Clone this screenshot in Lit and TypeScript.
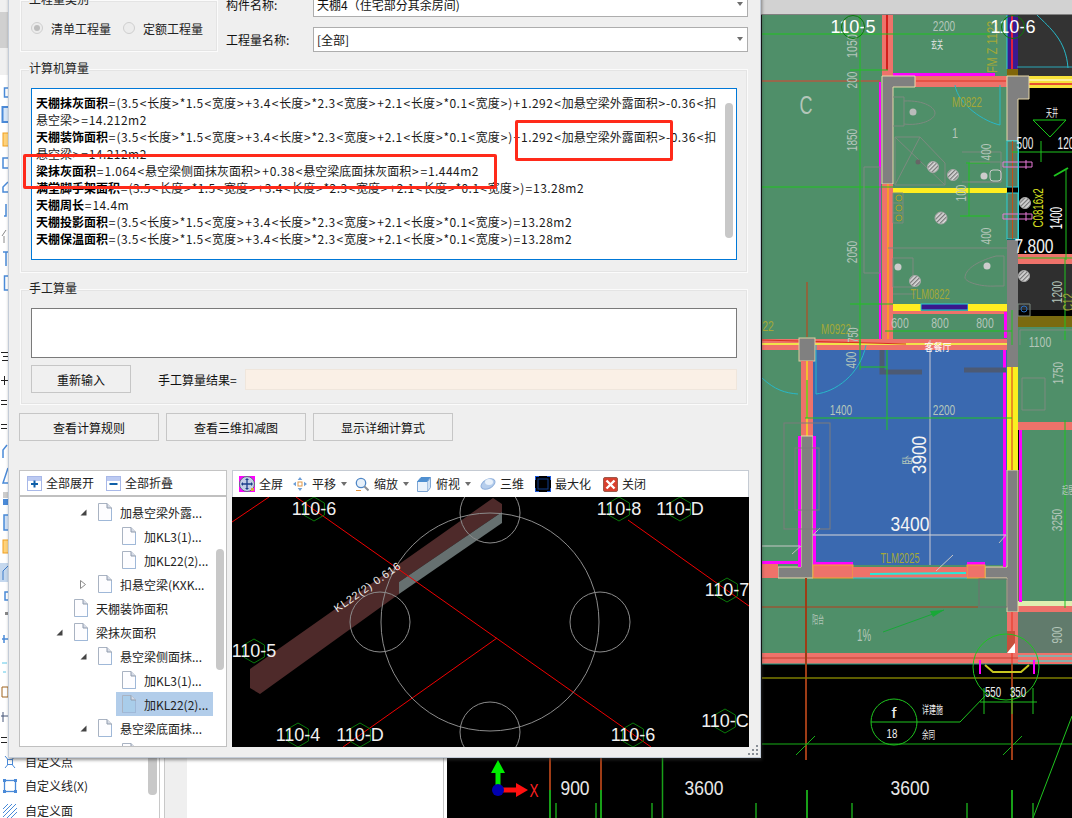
import { LitElement, html, css, svg } from "lit";
import { customElement } from "lit/decorators.js";

const F = "(3.5<长度>*1.5<宽度>+3.4<长度>*2.3<宽度>+2.1<长度>*0.1<宽度>)";
const LINES: [string, string][] = [
  ["天棚抹灰面积", "=" + F + "+1.292<加悬空梁外露面积>-0.36<扣"],
  ["", "悬空梁>=14.212m2"],
  ["天棚装饰面积", "=" + F + "+1.292<加悬空梁外露面积>-0.36<扣"],
  ["", "悬空梁>=14.212m2"],
  ["梁抹灰面积", "=1.064<悬空梁侧面抹灰面积>+0.38<悬空梁底面抹灰面积>=1.444m2"],
  ["满堂脚手架面积", "=" + F + "=13.28m2"],
  ["天棚周长", "=14.4m"],
  ["天棚投影面积", "=" + F + "=13.28m2"],
  ["天棚保温面积", "=" + F + "=13.28m2"],
];

/* Split a formula into CJK runs, math operators (wider) and other ASCII (tracked) */
function formula(s: string) {
  const parts = s.match(/[<>=+]|[!-*,-;?-~]+|[^!-~]+/g) || [];
  return parts.map((p) => {
    if (/^[<>=+]$/.test(p)) return html`<span class="br">${p}</span>`;
    if (/^[!-~]+$/.test(p)) return html`<span class="asc">${p}</span>`;
    return p;
  });
}

type Node = { level: number; arrow?: "open" | "closed"; text: string; selected?: boolean };
const TREE: Node[] = [
  { level: 3, arrow: "open", text: "加悬空梁外露..." },
  { level: 4, text: "加KL3(1)..." },
  { level: 4, text: "加KL22(2)..." },
  { level: 3, arrow: "closed", text: "扣悬空梁(KXK..." },
  { level: 2, text: "天棚装饰面积" },
  { level: 2, arrow: "open", text: "梁抹灰面积" },
  { level: 3, arrow: "open", text: "悬空梁侧面抹..." },
  { level: 4, text: "加KL3(1)..." },
  { level: 4, text: "加KL22(2)...", selected: true },
  { level: 3, arrow: "open", text: "悬空梁底面抹..." },
  { level: 4, text: "加KL3(1)..." },
];

/* CAD text: fixed glyph height, narrow per-char advance, optional rotation */
function t(x: number, y: number, s: string, size: number, fill: string, adv: number, rot = 0) {
  const w = s.length * adv;
  return svg`<text x=${x} y=${y} font-size=${size} fill=${fill} text-anchor="middle" dominant-baseline="central"
    textLength=${w} lengthAdjust="spacingAndGlyphs" transform=${rot ? `rotate(${rot} ${x} ${y})` : ""}>${s}</text>`;
}
function r(x: number, y: number, w: number, h: number, fill: string, stroke = "none") {
  return svg`<rect x=${x} y=${y} width=${w} height=${h} fill=${fill} stroke=${stroke}/>`;
}
function l(x1: number, y1: number, x2: number, y2: number, c: string, w = 1) {
  return svg`<line x1=${x1} y1=${y1} x2=${x2} y2=${y2} stroke=${c} stroke-width=${w}/>`;
}
function hatch(x: number, y: number, rad: number) {
  return svg`<circle cx=${x} cy=${y} r=${rad} fill="url(#hatch)" stroke="#aaa" stroke-width="1"/>`;
}
const hexPts = (x: number, y: number, R: number) =>
  [0, 1, 2, 3, 4, 5]
    .map((i) => {
      const a = (Math.PI / 3) * i + Math.PI / 2;
      return `${(x + R * Math.cos(a)).toFixed(1)},${(y + R * Math.sin(a)).toFixed(1)}`;
    })
    .join(" ");

const GREEN = "#4f8f69";
const SALMON = "#ee726a";
const GRAY = "#808080";
const DIM = "#b4c6ba";
const OLIVE = "#a3a838";
const MAG = "#ff00ff";
const LINE_GREEN = "#1fc41f";

function cadDrawing() {
  return svg`
    <defs>
      <pattern id="hatch" width="3" height="3" patternUnits="userSpaceOnUse" patternTransform="rotate(45)">
        <rect width="3" height="3" fill="#ddd"/><rect width="1.3" height="3" fill="#777"/>
      </pattern>
    </defs>
    ${r(447, 0, 625, 818, "#000")}
    ${r(447, 0, 625, 14, "#d2d2d2")}${r(447, 14, 625, 1, "#808080")}

    ${r(762, 15, 245, 638, GREEN)}
    ${r(1017, 15, 55, 61, "#333")}
    ${r(1018, 254, 54, 10, SALMON)}
    ${r(1018, 264, 54, 46, "#2f2f2f")}
    ${r(1018, 316, 54, 11, "#7a6a10")}
    ${r(1018, 327, 54, 95, GREEN)}
    ${r(1018, 422, 54, 8, SALMON)}
    ${r(1020, 430, 52, 172, GREEN)}
    ${r(1018, 601, 54, 5, "#dff0b0")}
    ${r(1018, 606, 54, 6, SALMON)}
    ${r(1018, 612, 54, 41, "#617b6c")}

    <!-- top walls -->
    ${r(882, 15, 11, 61, SALMON)}${l(887, 15, 887, 70, "#d0201c", 2)}
    ${r(893, 76, 114, 11, SALMON)}${r(893, 73, 102, 3, MAG)}
    ${l(916, 81, 1006, 81, "#e03020")}${l(762, 81, 880, 81, "#e04030")}
    ${r(1007, 15, 11, 54, "#3b1a92")}${l(1007, 15, 1007, 69, "#28d0d8")}${l(1012, 15, 1012, 69, "#e02040", 2)}
    ${r(1007, 69, 11, 8, "#80660a")}
    ${l(1017, 67, 1072, 67, "#2aa8b8")}
    ${r(1018, 76, 54, 12, "#f7e23a")}${l(1018, 80, 1072, 80, "#fff")}${l(1018, 84, 1072, 84, "#e85030", 2)}

    <!-- grey columns -->
    <path d="M882 76H915V87H893V184H882Z" fill=${GRAY} stroke="#e8d8a8"/>
    <path d="M1007 76H1029V99H1018V141H1007Z" fill=${GRAY} stroke="#e8d8a8"/>
    ${r(1007, 240, 11, 100, GRAY)}
    ${r(879, 82, 2, 258, MAG)}${r(882, 184, 11, 156, SALMON)}${l(888, 184, 888, 340, "#f79a2c", 2)}
    ${r(893, 188, 114, 5, "#ffee20")}
    ${r(893, 304, 28, 7, "#ffee20")}${r(921, 304, 47, 6, "#3a188c", "#28d0d8")}${r(968, 304, 39, 7, "#ffee20")}
    ${r(893, 311, 114, 3, SALMON)}${r(1004, 312, 3, 26, MAG)}
    ${r(1007, 141, 11, 46, "#5a7a60", "#28d0d8")}${r(1007, 193, 11, 46, "#5a7a60", "#28d0d8")}
    ${r(1012, 141, 1, 98, "#c05018")}

    <!-- band above the blue room -->
    ${r(762, 339, 245, 11, SALMON)}${l(762, 344, 1007, 344, "#f2e24a", 2)}${l(762, 340, 906, 344, "#d83020")}
    ${r(866, 350, 16, 2, MAG)}

    <!-- blue room -->
    ${r(813, 350, 194, 215, "#3a69b0")}
    ${r(799, 338, 16, 23, GRAY, "#e0d0a0")}
    ${r(801, 361, 12, 75, SALMON)}${l(807, 361, 807, 436, "#f2c030", 2)}
    <path d="M801 436H813V578H778V567H801Z" fill=${GRAY} stroke="#e8d8a8"/>
    ${r(798, 436, 3, 131, MAG)}${r(813, 436, 3, 129, MAG)}
    ${r(762, 564, 16, 14, SALMON)}${r(762, 561, 38, 3, MAG)}
    <path d="M1007 470H1018V612H1007V578H985V567H1007Z" fill=${GRAY} stroke="#e8d8a8"/>
    ${r(1007, 340, 11, 27, GRAY)}
    ${r(1007, 367, 11, 103, "#f8f020")}${l(1012, 367, 1012, 470, "#e89020", 2)}
    ${r(1003, 350, 3, 217, MAG)}${r(1019, 430, 3, 172, MAG)}
    ${r(813, 562, 40, 3, MAG)}${r(967, 562, 18, 3, MAG)}
    ${r(813, 565, 40, 13, SALMON, "#f0a830")}${r(967, 565, 18, 13, SALMON, "#f0a830")}
    ${r(853, 567, 114, 11, SALMON)}${l(853, 578, 967, 578, "#28d0d8")}${l(870, 574, 966, 573, "#28e8d8", 2)}
    <path d="M882 350V372H922M964 370H1006" fill="none" stroke="#4c5a74" stroke-width="5"/>
    ${l(930, 340, 930, 565, "#c8c8d0")}
    ${l(813, 535, 1006, 535, "#d8d8d8")}
    ${l(953, 555, 936, 571, "#c8c8c8")}
    ${l(813, 535, 820, 528, "#c0c0c0")}${l(1006, 535, 999, 543, "#c0c0c0")}
    ${l(762, 546, 800, 546, "#c8c8c8")}${l(792, 554, 801, 546, "#c0c0c0")}
    ${r(784, 423, 46, 106, "none", "#7c7c7c")}
    ${r(795, 448, 24, 62, "none", "#7c7c7c")}

    <!-- lower balcony band -->
    ${r(762, 653, 256, 11, SALMON)}${l(762, 664, 1072, 664, "#18a088")}${l(762, 658, 1018, 658, "#c04030")}
    ${r(1007, 612, 11, 41, SALMON)}${l(1012, 612, 1012, 664, "#e83020")}
    ${r(1007, 631, 8, 22, "#fff")}<path d="M1007 631H1015V643L1007 653Z" fill="#c8503c"/>
    ${r(1018, 653, 54, 11, SALMON)}
    ${l(1018, 656, 1072, 656, "#28e8e8")}${l(1018, 661, 1072, 661, "#28e8e8")}
    ${l(762, 607, 978, 607, "#b83c1c")}
    ${r(979, 579, 28, 28, "none", "#707070")}
    ${l(806, 578, 806, 760, "#9e3c16", 2)}
    ${l(883, 632, 944, 610, "#18a838")}<path d="M944 610L930 611L933 617Z" fill="#18a838"/>

    <!-- green dim lines top room -->
    ${l(860, 15, 860, 345, LINE_GREEN)}
    ${l(762, 34, 990, 34, LINE_GREEN)}
    ${l(850, 70, 888, 70, LINE_GREEN)}${l(762, 187, 893, 187, LINE_GREEN)}
    ${l(850, 304, 893, 304, LINE_GREEN)}
    ${l(885, 331, 1012, 331, LINE_GREEN)}
    ${l(966, 163, 990, 163, LINE_GREEN)}${l(969, 163, 969, 216, LINE_GREEN)}${l(960, 216, 990, 216, LINE_GREEN)}
    ${l(1012, 152, 1072, 152, LINE_GREEN)}${l(1041, 141, 1041, 162, LINE_GREEN)}
    ${l(1066, 170, 1066, 260, LINE_GREEN)}${l(1054, 176, 1068, 168, LINE_GREEN, 2)}
    ${l(1018, 258, 1072, 258, LINE_GREEN)}
    ${l(1065, 258, 1065, 340, LINE_GREEN)}${l(1065, 420, 1065, 608, LINE_GREEN)}
    ${l(1012, 310, 1012, 345, LINE_GREEN)}
    ${l(805, 418, 1012, 418, LINE_GREEN)}${l(887, 350, 887, 430, LINE_GREEN)}${l(860, 367, 887, 367, LINE_GREEN)}
    ${l(860, 340, 860, 370, LINE_GREEN)}
    ${l(807, 380, 807, 418, LINE_GREEN)}

    <!-- door arcs -->
    <path d="M955 85C958 105 985 122 1000 125V85" fill="none" stroke="#28b8c8"/>
    <path d="M816 394C835 392 860 375 866 345M816 345V394" fill="none" stroke="#28b8c8"/>
    <path d="M762 378C775 390 785 393 798 394" fill="none" stroke="#28b8c8"/>
    <path d="M1037 15C1050 28 1066 40 1068 68" fill="none" stroke="#28b8c8"/>

    <!-- fixtures -->
    <g fill="none" stroke="#7d8a80">
      <path d="M893 97H904V126H893M904 101C925 100 935 108 935 113C935 120 920 126 904 124"/>
      <path d="M895 137H920L945 163V185H895Z M895 137L945 185M920 137L895 185"/>
      <path d="M962 152H1001V182H962M970 162H1001V182H970"/>
      <path d="M864 167H880V273H864Z"/>
      <path d="M888 248H1007M893 258H913V287H893Z M893 294H915"/>
      <path d="M1004 256H996C975 262 965 270 965 278C966 282 980 287 996 286H1004Z"/>
      <path d="M893 193H903V223H893Z M893 203H903M893 213H903"/>
      <path d="M1018 304H1030V316H1018Z"/>
      <path d="M1020 330H1072M1020 330V345M1022 378H1045V410H1022Z"/>
    </g>
    <circle cx="899" cy="198" r="3" fill="none" stroke="#b0a030"/><circle cx="899" cy="208" r="3" fill="none" stroke="#b0a030"/><circle cx="899" cy="218" r="3" fill="none" stroke="#b0a030"/>
    ${l(807, 282, 807, 337, "#a05830", 1.5)}
    <circle cx="913" cy="112" r="3.5" fill="#bbb"/><circle cx="918" cy="162" r="2.5" fill="#666"/>
    <circle cx="984" cy="176" r="3.5" fill="#ccc"/><rect x="990" y="170" width="11" height="11" rx="3" fill="none" stroke="#ccc"/>
    <circle cx="898" cy="267" r="3.5" fill="#ccc"/><circle cx="987" cy="266" r="3.5" fill="#ccc"/>
    <circle cx="1024" cy="309" r="3" fill="none" stroke="#2a70c0"/>
    ${hatch(933, 167, 5.5)}${hatch(953, 175, 5.5)}${hatch(941, 218, 6)}${hatch(915, 281, 5.5)}${hatch(1025, 203, 5.5)}${hatch(1024, 276, 5.5)}
    <g fill="none" stroke="#e878d8">
      <path d="M1003 162H1032V167H1003ZM1026 160V169"/>
      <path d="M1003 214H1032V219H1003ZM1026 212V221"/>
    </g>
    <path d="M1033 120H1066L1050 137Z" fill="none" stroke="#18d018"/>
    ${r(1018, 141, 1, 98, "#28d0d8")}

    <!-- lower section -->
    ${l(762, 678, 1072, 678, "#7c7c00", 1.5)}
    ${l(762, 744, 1072, 744, "#16b016")}
    ${l(796, 755, 815, 736, "#16b016")}${l(1003, 755, 1022, 736, "#16b016")}
    ${l(1012, 664, 1012, 760, "#9e3c16", 2)}
    <circle cx="1006" cy="667" r="33" fill="none" stroke=${LINE_GREEN}/>
    <path d="M985 665L993 672H1021L1029 665" fill="none" stroke="#c8c820" stroke-width="2"/>
    ${r(979, 660, 2, 14, MAG)}${r(1033, 660, 2, 14, MAG)}
    ${l(980, 702, 1037, 702, LINE_GREEN)}
    ${l(984, 688, 984, 714, LINE_GREEN)}${l(1012, 688, 1012, 714, LINE_GREEN)}${l(1033, 688, 1033, 714, LINE_GREEN)}
    <circle cx="894" cy="722" r="23" fill="none" stroke=${LINE_GREEN}/>
    <path d="M871 722H960L985 696" fill="none" stroke=${LINE_GREEN}/>
    ${l(1072, 716, 1033, 818, LINE_GREEN)}

    <!-- bottom ticks -->
    ${[550, 601, 807, 1012].map((x) => l(x, 790, x, 818, "#18a018", 2))}
    ${l(550, 758, 550, 790, "#9e3c16", 2)}${l(601, 758, 601, 790, "#9e3c16", 2)}
    ${l(662.5, 758, 662.5, 818, "#18a018", 1.5)}
    ${[556, 596, 652, 756, 852, 967, 1033].map((x) => l(x, 803, x, 818, "#18a018", 1.5))}

    <!-- axis -->
    ${l(498, 790, 498, 770, "#00ee00", 5)}<path d="M498 760L505 773H491Z" fill="#00ee00"/>
    ${l(498, 790, 518, 790, "#ff1010", 5)}<path d="M528 790L516 783V797Z" fill="#ff1010"/>
    <circle cx="498" cy="790" r="6" fill="#0000b0"/>

    <!-- texts -->
    <g font-family="'Liberation Sans','Noto Sans CJK SC',sans-serif">
      ${t(534, 791, "X", 18, "#ff2020", 9)}
      ${t(575, 788, "900", 20, "#e8e8e8", 9.7)}${t(704, 788, "3600", 20, "#e8e8e8", 9.7)}${t(910, 788, "3600", 20, "#e8e8e8", 9.7)}
      ${t(944, 25, "2200", 15, DIM, 5.6)}
      ${t(851, 46, "1050", 15, DIM, 6, -90)}${t(851, 80, "200", 15, DIM, 5.6, -90)}
      ${t(851, 140, "1850", 15, DIM, 5.6, -90)}${t(851, 252, "2050", 15, DIM, 5.6, -90)}
      ${t(806, 105, "C", 26, DIM, 13)}
      ${t(967, 101, "M0822", 15, OLIVE, 6)}${t(955, 132, "1", 15, DIM, 6)}
      ${t(991, 47, "FM Z 1123", 15, OLIVE, 5.8, -90)}
      ${t(985, 152, "400", 15, DIM, 5.6, -90)}${t(985, 236, "400", 15, DIM, 5.6, -90)}${t(960, 193, "100", 15, DIM, 5.6, -90)}
      ${t(1025, 143, "500", 16, "#eee", 5.6)}${t(1066, 143, "120", 16, "#eee", 5.6)}
      ${t(1037, 208, "C0816x2", 15, "#d8e020", 5.6, -90)}
      ${t(1056, 218, "1400", 16, "#fff", 5.6, -90)}
      ${t(1034, 246, "7.800", 20, "#f0f0f0", 7.8)}
      ${t(1056, 292, "1200", 15, DIM, 5.6, -90)}${t(1067, 302, "C12", 15, OLIVE, 6, -90)}
      ${t(930, 293, "TLM0822", 15, OLIVE, 5.6)}
      ${t(900, 322, "600", 15, DIM, 5.8)}${t(940, 322, "800", 15, DIM, 5.8)}${t(985, 322, "800", 15, DIM, 5.8)}
      ${t(836, 328, "M0922", 15, OLIVE, 6)}${t(768, 325, "22", 15, OLIVE, 5.8)}${t(853, 335, "750", 14, DIM, 5, -90)}
      ${t(1040, 341, "1100", 15, DIM, 5.6)}
      ${t(850, 360, "400", 15, DIM, 5.6, -90)}
      ${t(841, 409, "1400", 15, DIM, 5.6)}${t(944, 409, "2200", 15, DIM, 5.6)}
      ${t(919, 455, "3900", 20, "#f4f4f4", 9.6, -90)}${t(910, 524, "3400", 20, "#f4f4f4", 9.7)}
      ${t(900, 557, "TLM2025", 15, OLIVE, 5.6)}
      ${t(1057, 373, "1750", 15, DIM, 5.6, -90)}${t(1056, 520, "3250", 15, DIM, 5.6, -90)}${t(1056, 635, "900", 15, DIM, 5.6, -90)}
      ${t(864, 635, "1%", 17, DIM, 7)}
      ${t(993, 692, "550", 14, "#eee", 5.4)}${t(1018, 692, "350", 14, "#eee", 5.4)}
      ${t(894, 712, "f", 15, "#f0f0f0", 5)}${t(892, 733, "18", 13, "#f0f0f0", 5.4)}
      ${t(853, 27, "110-5", 18, "#fff", 9)}${t(1013, 27, "110-6", 18, "#fff", 9)}
      ${t(937, 45, "玄关", 11, "#e8e8e8", 6)}${t(1052, 113, "天井", 11, "#f4f4f4", 6)}
      ${t(938, 347, "客餐厅", 10, "#fff", 9)}
      ${t(907, 460, "卧", 10, DIM, 10, -90)}${t(818, 620, "阳台", 11, DIM, 6)}
      ${t(1068, 490, "起居", 10, DIM, 6)}
      ${t(932.5, 710, "详建施", 11, "#eee", 7)}${t(928.5, 735, "余同", 11, "#eee", 6.5)}
    </g>
    <circle cx="853" cy="27" r="11.5" fill="none" stroke="#0a7a0a"/>
    <circle cx="1013" cy="27" r="11.5" fill="none" stroke="#0a7a0a"/>
  `;
}

function previewDrawing() {
  const labels: [number, number, string][] = [
    [82, 12, "110-6"], [387, 12, "110-8"], [448, 12, "110-D"], [495, 93, "110-7"], [22, 154, "110-5"],
    [66, 238, "110-4"], [128, 238, "110-D"], [401, 238, "110-6"], [493, 224, "110-C"],
  ];
  return svg`
    <rect width="517" height="250" fill="#000"/>
    <polygon points="18,172 261,1 270,7 270,15 167,85 167,97 28,197 18,191" fill="#4e2a2a"/>
    <polygon points="270,15 270,26 167,97 167,85" fill="#667070"/>
    <g stroke="#f00000" stroke-width="1">
      <line x1="64" y1="0" x2="419" y2="250"/>
      <line x1="0" y1="25" x2="37" y2="0"/>
      <line x1="396" y1="23" x2="517" y2="109"/>
      <line x1="265" y1="141" x2="111" y2="250"/>
    </g>
    <g fill="none" stroke="#8c8c8c" stroke-width="1">
      <circle cx="258" cy="125" r="109"/>
      <circle cx="258" cy="16" r="30"/><circle cx="148" cy="125" r="30"/>
      <circle cx="368" cy="125" r="30"/><circle cx="258" cy="235" r="30"/>
    </g>
    ${labels.map(([x, y]) => svg`<polygon points=${hexPts(x, y, 12)} fill="none" stroke="#0a7a0a"/>`)}
    <g font-family="'Liberation Sans',sans-serif" fill="#f0f0f0" text-anchor="middle" dominant-baseline="central">
      ${labels.map(([x, y, s]) => svg`<text x=${x} y=${y} font-size="18">${s}</text>`)}
      <text x="135" y="90" font-size="11" textLength="78" transform="rotate(-35 135 90)">KL22(2) 0.616</text>
    </g>`;
}

const docIcon = html`<svg class="doc" width="14" height="18" viewBox="0 0 14 18">
  <path d="M.5.5H9L13.5 5V17.5H.5Z" class="doc-body" stroke="#a9b3c2"/>
  <path d="M9 .5V5H13.5" fill="#d6dbe6" stroke="#8f9bad"/>
  <path d="M13.5 6V17.5H1" fill="none" stroke="#9fb8d8"/>
</svg>`;

const icons = {
  plus: html`<svg width="15" height="15" viewBox="0 0 15 15"><rect x=".5" y=".5" width="14" height="14" fill="#fff" stroke="#a8b8e8"/><rect x="1" y="1" width="13" height="4" fill="#bccaf2"/><path d="M7.5 4.5v7M4 8h7" stroke="#0f5fa8" stroke-width="2"/></svg>`,
  minus: html`<svg width="15" height="15" viewBox="0 0 15 15"><rect x=".5" y=".5" width="14" height="14" fill="#fff" stroke="#a8b8e8"/><rect x="1" y="1" width="13" height="4" fill="#bccaf2"/><path d="M3.5 8h8" stroke="#0f5fa8" stroke-width="2"/></svg>`,
  full: html`<svg width="16" height="16" viewBox="0 0 16 16"><rect width="16" height="16" fill="#f0f"/><circle cx="8" cy="8" r="7.5" fill="#c3cfe6" stroke="#5d6a80"/><path d="M8 3v10M3 8h10" stroke="#1c3f8a" stroke-width="1.3"/><path d="M8 2l2 2H6ZM8 14l2-2H6ZM2 8l2-2v4ZM14 8l-2-2v4Z" fill="#1c3f8a"/><rect x="12" y="12" width="3" height="3" fill="#d9a53a"/></svg>`,
  pan: html`<svg width="14" height="14" viewBox="0 0 14 14"><rect x="5" y="5" width="4" height="4" fill="none" stroke="#e0994a"/><path d="M7 0l2.3 3H4.7ZM7 14l2.3-3H4.7ZM0 7l3-2.3v4.600ZM14 7l-3-2.300v4.600Z" fill="#6d9ed6"/></svg>`,
  zoom: html`<svg width="14" height="15" viewBox="0 0 14 15"><circle cx="6" cy="6" r="4.700" fill="#e6f0fa" stroke="#4f87c6" stroke-width="1.300"/><path d="M9.500 9.500L13.500 13.500" stroke="#8a8f96" stroke-width="2"/><path d="M1 13.500h5" stroke="#e0903a"/></svg>`,
  top: html`<svg width="14" height="15" viewBox="0 0 14 15"><path d="M.5 4.500H10.500V14.500H.5Z" fill="#eaf2fb" stroke="#7ea6d4"/><path d="M.5 4.500L4 .5H13.500L10.500 4.500Z" fill="#4f8fd0" stroke="#4f8fd0"/><path d="M10.500 4.500L13.500 .5V10.500L10.500 14.500" fill="#cfe0f2" stroke="#7ea6d4"/></svg>`,
  three: html`<svg width="16" height="14" viewBox="0 0 16 14"><ellipse cx="8" cy="7" rx="7.500" ry="4.500" transform="rotate(-28 8 7)" fill="#b5cdec" stroke="#8fb0dc"/><ellipse cx="9" cy="5" rx="4" ry="3" fill="#e8f1fb"/></svg>`,
  max: html`<svg width="16" height="16" viewBox="0 0 16 16"><rect width="16" height="16" fill="#000"/><rect x="3" y="3" width="10" height="10" fill="none" stroke="#123e8c"/><path d="M0 4V0H4M12 0H16V4M16 12V16H12M4 16H0V12" fill="none" stroke="#1a56d8" stroke-width="2"/></svg>`,
  close: html`<svg width="15" height="15" viewBox="0 0 15 15"><rect x=".5" y=".5" width="14" height="14" rx="1.500" fill="#d8402e" stroke="#9c5a4c"/><path d="M3.500 3.500l8 8M11.500 3.500l-8 8" stroke="#fff" stroke-width="2.400"/></svg>`,
};

@customElement("app-root")
export class AppRoot extends LitElement {
  static styles = css`
    :host {
      display: block;
      position: relative;
      width: 1072px;
      height: 818px;
      overflow: hidden;
      background: #fff;
      font-family: "Noto Sans CJK SC", "Liberation Sans", sans-serif;
      font-size: 12px;
      color: #111;
    }
    .desktop { display: flex; width: 100%; height: 100%; }

    /* application behind the dialog */
    .side { width: 159px; height: 100%; position: relative; display: flex; flex-direction: column; justify-content: flex-end; border-right: 1px solid #c8c8c8; }
    .side-top { position: absolute; left: 0; top: 0; }
    .side-row { height: 24.5px; display: flex; align-items: center; gap: 8px; padding-left: 3px; color: #222; line-height: 1; }
    .side-row svg { width: 14px; height: 14px; flex: none; }
    .side-list { padding-bottom: 0; margin-bottom: -5px; }
    .side-thumb { position: absolute; left: 148px; top: 745px; width: 9px; height: 50px; background: #c8c8c8; border-radius: 0 0 4px 4px; }
    .gutter { width: 4px; }
    .pane-gray { width: 22px; background: #efefef; border-left: 1px solid #c8c8c8; }
    .pane-white { width: 256px; border-right: 1px solid #c8c8c8; }
    .pane-space { width: 3px; }
    .cad { width: 625px; height: 818px; display: block; flex: none; }

    /* dialog window */
    .dialog {
      position: absolute;
      left: 8px;
      top: -20px;
      width: 753px;
      height: 778px;
      box-sizing: border-box;
      background: #efefef;
      border: 1px solid #c3ccd8;
      box-shadow: 1px 2px 3px rgba(60, 60, 60, 0.55);
      padding: 11px 12px 0 11px;
      display: flex;
      flex-direction: column;
    }
    .top-row { display: flex; height: 60px; gap: 8px; flex: none; }
    .group { border: 1px solid #fbfbfb; box-shadow: 0 0 0 1px #e4e4e4 inset; box-sizing: border-box; }
    .legend { display: block; width: fit-content; height: 16px; line-height: 16px; margin: -10px 0 0 8px; color: #222; background: #efefef; }
    .calc .legend, .manual .legend { margin-left: -2px; }
    .type-group { width: 198px; height: 52px; margin-top: 8px; }
    .radios { display: flex; align-items: center; padding: 8px 0 0 10px; height: 26px; }
    .radio { width: 12px; height: 12px; border-radius: 50%; border: 1px solid #cfcfcf; box-sizing: border-box; background: #ececec; margin-right: 8px; display: flex; align-items: center; justify-content: center; }
    .radio.on::after { content: ""; width: 6px; height: 6px; border-radius: 50%; background: #bdbdbd; }
    .radios span + .radio { margin-left: 12px; }
    .radios span { color: #222; }
    .fields { flex: 1; display: flex; flex-direction: column; gap: 10px; }
    .field { display: flex; align-items: center; height: 25px; }
    .field-label { width: 87px; flex: none; padding-bottom: 1px; }
    .select { flex: 1; height: 25px; box-sizing: border-box; background: #fff; border: 1px solid #adadad; display: flex; align-items: center; justify-content: space-between; padding: 0 4px 1px 3px; }
    .caret { width: 0; height: 0; border: 3px solid transparent; border-top: 4px solid #6e6e6e; border-bottom: 0; flex: none; }

    .calc { margin-top: 17px; height: 204px; flex: none; padding: 0 10px; }
    .calc .box { margin-top: 12px; }
    .box { position: relative; height: 172px; box-sizing: border-box; background: #fff; border: 1px solid #0078d7; padding: 5px 4px; }
    .line { height: 17px; line-height: 17px; white-space: nowrap; color: #1a1a1a; }
    .line b { font-weight: 700; color: #000; }
    .asc { letter-spacing: 0.45px; }
    .br { padding: 0 0.85px; }
    .vthumb { position: absolute; background: #c8c8c8; border-radius: 4px; width: 8px; }
    .box .vthumb { left: 693px; top: 14px; height: 135px; }

    .manual { margin-top: 16px; height: 116px; flex: none; padding: 0 10px; }
    .manual-input { margin-top: 12px; height: 50px; box-sizing: border-box; background: #fff; border: 1px solid #7a7a7a; }
    .manual-row { display: flex; align-items: center; margin-top: 7px; }
    .btn { box-sizing: border-box; height: 28px; display: flex; align-items: center; justify-content: center; border: 1px solid #c6c6c6; background: #f0f0f0; color: #111; flex: none; }
    .btn.small { width: 100px; }
    .btn.wide { width: 140px; }
    .result-label { margin-left: 27px; width: 87px; flex: none; }
    .result { flex: 1; height: 21px; box-sizing: border-box; background: #faf0e6; border: 1px solid #efe6dc; }
    .actions { display: flex; gap: 7px; margin: 8px 0 0 -1px; flex: none; }

    .panes { display: flex; gap: 5px; margin: 29px -1px 0 -1px; height: 277px; flex: none; }
    .pane { position: relative; display: flex; flex-direction: column; }
    .pane.tree-pane { width: 208px; }
    .pane.view-pane { width: 517px; }
    .toolbar { height: 27px; flex: none; box-sizing: border-box; background: #fff; border: 1px solid #c5cbd3; border-bottom: 0; display: flex; align-items: center; color: #222; }
    .tool span { position: relative; top: -1px; }
    .tree-pane .toolbar { padding-left: 7px; border-color: #c4c4c4; border-bottom: 2px solid #c0c0c0; }
    .tool { display: flex; align-items: center; gap: 4px; flex: none; }
    .tree-pane .tool { width: 79px; }
    .view-pane .toolbar { padding-left: 1px; }
    .view-pane .tool { padding: 0 5px; gap: 5px; }
    .view-pane .tool.g4 { gap: 4px; }
    .tool .caret { margin-right: -2px; }
    .tool.m1 { margin-left: 1px; }
    .tool.m2 { margin-left: 2px; }
    .tool svg { flex: none; display: block; }
    .tree { position: relative; flex: 1; min-height: 0; overflow: hidden; box-sizing: border-box; background: #fff; border: 1px solid #c0c0c0; border-top: 0; padding-top: 3px; }
    .tree .vthumb { left: 196px; top: 52px; height: 121px; }
    .row { height: 24px; display: flex; align-items: center; white-space: nowrap; color: #222; }
    .arrow { width: 18px; flex: none; display: flex; justify-content: center; margin-left: -6px; padding-right: 6px; box-sizing: content-box; }
    .arrow svg { display: block; }
    .node { display: flex; align-items: center; height: 24px; gap: 8px; padding: 0 5px 0 6px; margin-left: -6px; }
    .node.selected { background: #b2cdea; }
    .doc { flex: none; }
    .doc-body { fill: #fdfdff; }
    .node.selected .doc-body { fill: #a9cdea; }
    .canvas { width: 517px; height: 250px; display: block; flex: none; }
    .grip { position: absolute; right: 1px; bottom: 1px; display: block; }

    .mark { position: absolute; box-sizing: border-box; border: 3px solid #ff2a1a; border-radius: 2px; pointer-events: none; }
    .mark.a { left: 23px; top: 154px; width: 474px; height: 35px; }
    .mark.b { left: 515px; top: 120px; width: 158px; height: 41px; }
  `;

  render() {
    return html`
      <div class="desktop">
        <div class="side">
          <svg class="side-top" width="8" height="760" viewBox="0 0 8 760">
            <rect width="8" height="12" fill="#f0f0f0"/><rect y="12" width="8" height="36" fill="#d0d0d0"/><rect y="48" width="8" height="27" fill="#f0f0f0"/>
            <g fill="none" stroke="#4a8ad8" stroke-width="1.500">
              <rect x="4.500" y="88" width="6" height="9"/>
              <rect x="2.500" y="107" width="8" height="15" fill="#d6e6f8" stroke-width="2"/>
              <rect x="3" y="158" width="8" height="10"/>
              <path d="M8 182L3 187V192H8"/>
              <path d="M6 204V216H4"/>
              <path d="M3 252H8M6 252V266"/>
              <rect x="4.500" y="276" width="6" height="14"/>
              <path d="M7 445L3 450V458"/>
              <path d="M8 468L3 483H8"/>
              <rect x="4" y="515" width="5" height="15" fill="#cfe0f5"/>
              <rect x="5" y="592" width="6" height="8"/>
              <path d="M2 639H8M4 635V643"/>
            </g>
            <rect x="3" y="133" width="6" height="13" fill="#ffd27a" stroke="#f0a020"/>
            <path d="M6 230L2 236M4 236V243" stroke="#888" fill="none"/>
            <rect x="3" y="492" width="6" height="6" fill="#ccc"/><rect x="3" y="499" width="6" height="6" fill="#4a8ad8"/>
            <rect x="3" y="540" width="6" height="13" fill="#ffd27a" stroke="#f0a020"/>
            <rect y="563" width="8" height="19" fill="#c5d8ee"/><path d="M8 566L3 571V580" stroke="#3c7ac8" fill="none"/>
            <rect x="5" y="612" width="3" height="3" fill="#888"/>
            <path d="M2 663H7M3 672H6" stroke="#5cc8e8"/>
            <path d="M2 687H8V697H2Z" fill="none" stroke="#a0641e"/>
            <path d="M1 716H8M3 712V722" stroke="#457" fill="none"/>
            <g fill="#222"><rect x="1" y="352" width="7" height="1"/><rect x="3" y="356" width="5" height="1"/><rect x="2" y="360" width="6" height="1"/>
              <rect x="4" y="376" width="1" height="9"/><rect x="1" y="380" width="7" height="1"/>
              <rect x="1" y="400" width="6" height="1"/><rect x="1" y="404" width="6" height="1"/>
              <rect x="1" y="424" width="6" height="1"/><rect x="1" y="428" width="6" height="1"/>
              <rect x="1" y="737" width="6" height="1"/><rect x="1" y="742" width="6" height="1"/></g>
          </svg>
          <div class="side-list">
            <div class="side-row">
              <svg viewBox="0 0 14 14"><path d="M2 1L12 13M12 1L2 13" stroke="#4a8ad8"/><rect x="4.500" y="4.500" width="5" height="5" fill="#fff" stroke="#4a8ad8"/></svg>
              自定义点
            </div>
            <div class="side-row">
              <svg viewBox="0 0 14 14"><rect x="1.500" y="1.500" width="11" height="11" fill="none" stroke="#4a8ad8" stroke-width="1.300"/><g fill="#4a8ad8"><rect width="3" height="3"/><rect x="11" width="3" height="3"/><rect y="11" width="3" height="3"/><rect x="11" y="11" width="3" height="3"/></g></svg>
              自定义线(X)
            </div>
            <div class="side-row">
              <svg viewBox="0 0 14 14"><path d="M0 5L5 0M0 9L9 0M0 13L13 0M4 14L14 4M8 14L14 8" stroke="#4a8ad8" fill="none"/></svg>
              自定义面
            </div>
          </div>
          <div class="side-thumb"></div>
        </div>
        <div class="gutter"></div>
        <div class="pane-gray"></div>
        <div class="pane-white"></div>
        <div class="pane-space"></div>
        <svg class="cad" viewBox="447 0 625 818">${cadDrawing()}</svg>
      </div>

      <div class="dialog">
        <div class="top-row">
          <div class="group type-group">
            <span class="legend">工程量类别</span>
            <div class="radios">
              <i class="radio on"></i><span>清单工程量</span>
              <i class="radio"></i><span>定额工程量</span>
            </div>
          </div>
          <div class="fields">
            <div class="field">
              <span class="field-label">构件名称:</span>
              <div class="select"><span>天棚4（住宅部分其余房间)</span><i class="caret"></i></div>
            </div>
            <div class="field">
              <span class="field-label">工程量名称:</span>
              <div class="select"><span>[全部]</span><i class="caret"></i></div>
            </div>
          </div>
        </div>

        <div class="group calc">
          <span class="legend">计算机算量</span>
          <div class="box">
            ${LINES.map(([b, rest]) => html`<div class="line">${b ? html`<b>${b}</b>` : ""}${formula(rest)}</div>`)}
            <div class="vthumb"></div>
          </div>
        </div>

        <div class="group manual">
          <span class="legend">手工算量</span>
          <div class="manual-input"></div>
          <div class="manual-row">
            <div class="btn small">重新输入</div>
            <span class="result-label">手工算量结果=</span>
            <div class="result"></div>
          </div>
        </div>

        <div class="actions">
          <div class="btn wide">查看计算规则</div>
          <div class="btn wide">查看三维扣减图</div>
          <div class="btn wide">显示详细计算式</div>
        </div>

        <div class="panes">
          <div class="pane tree-pane">
            <div class="toolbar">
              <div class="tool">${icons.plus}<span>全部展开</span></div>
              <div class="tool">${icons.minus}<span>全部折叠</span></div>
            </div>
            <div class="tree">
              ${TREE.map((n) => html`
                <div class="row" style="padding-left:${(n.level - 2) * 24 + 36}px">
                  <span class="arrow">
                    ${n.arrow === "open"
                      ? html`<svg width="7" height="7" viewBox="0 0 7 7"><path d="M6.500.5V6.500H.5Z" fill="#444"/></svg>`
                      : n.arrow === "closed"
                      ? html`<svg width="6" height="9" viewBox="0 0 6 9"><path d="M.5.5L5.500 4.500L.5 8.500Z" fill="#fff" stroke="#8a8a8a"/></svg>`
                      : ""}
                  </span>
                  <span class="node ${n.selected ? "selected" : ""}">${docIcon}<span>${n.text}</span></span>
                </div>`)}
              <div class="vthumb"></div>
            </div>
          </div>
          <div class="pane view-pane">
            <div class="toolbar">
              <div class="tool g4">${icons.full}<span>全屏</span></div>
              <div class="tool">${icons.pan}<span>平移</span><i class="caret"></i></div>
              <div class="tool">${icons.zoom}<span>缩放</span><i class="caret"></i></div>
              <div class="tool">${icons.top}<span>俯视</span><i class="caret"></i></div>
              <div class="tool g4 m1">${icons.three}<span>三维</span></div>
              <div class="tool g4 m1">${icons.max}<span>最大化</span></div>
              <div class="tool g4 m2">${icons.close}<span>关闭</span></div>
            </div>
            <svg class="canvas" viewBox="0 0 517 250">${previewDrawing()}</svg>
          </div>
        </div>

        <svg class="grip" width="11" height="11" viewBox="0 0 11 11" fill="#8a8f96">
          <rect x="8" y="0" width="2" height="2"/><rect x="4" y="4" width="2" height="2"/><rect x="8" y="4" width="2" height="2"/>
          <rect x="0" y="8" width="2" height="2"/><rect x="4" y="8" width="2" height="2"/><rect x="8" y="8" width="2" height="2"/>
        </svg>
      </div>

      <div class="mark a"></div>
      <div class="mark b"></div>
    `;
  }
}
